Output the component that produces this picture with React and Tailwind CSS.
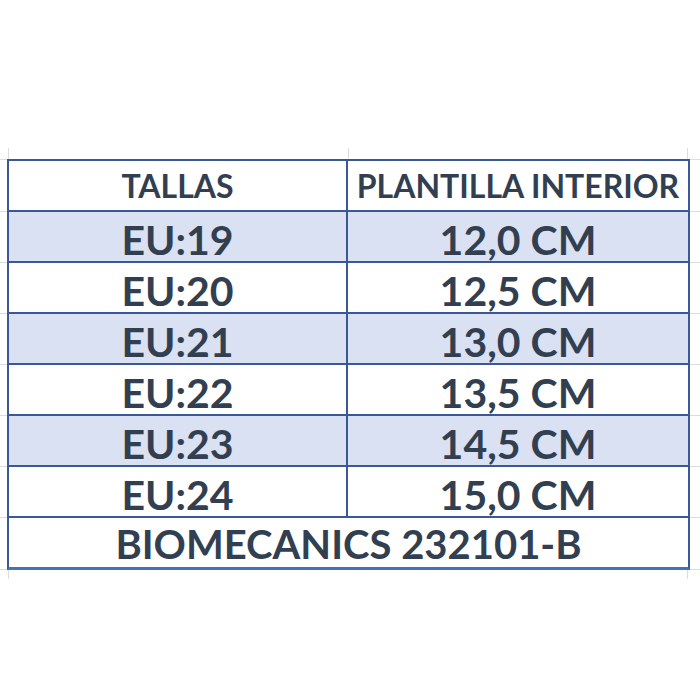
import React from "react";

const rows = [
  ["EU:19", "12,0 CM", true],
  ["EU:20", "12,5 CM", false],
  ["EU:21", "13,0 CM", true],
  ["EU:22", "13,5 CM", false],
  ["EU:23", "14,5 CM", true],
  ["EU:24", "15,0 CM", false],
];

const font = { fontFamily: "Lato, 'Open Sans', sans-serif" };

function Row({ children, top = false, last = false }) {
  return (
    <div className="flex">
      <div className={"w-[7px] shrink-0 border-[#dcdcdc] " + (top ? "border-t" : "") + " border-b"} />
      <div
        className={
          "flex w-[683px] shrink-0 border-x-2 border-[#3a5895] " +
          (top ? "border-t-2 " : "") +
          (last ? "border-b-[3px] border-b-[#4470bf]" : "border-b-2")
        }
      >
        {children}
      </div>
      <div className={"flex-1 border-[#dcdcdc] " + (top ? "border-t" : "") + " border-b"} />
    </div>
  );
}

export default function App() {
  return (
    <div className="w-[700px] h-[700px] bg-white pt-[148px] text-[#323f50] font-bold" style={font}>
      <div className="flex h-[11px]">
        <div className="w-[8px]" />
        <div className="w-[340px] border-l border-[#dcdcdc]" />
        <div className="w-[340px] border-x border-[#dcdcdc]" />
      </div>
      <Row top>
        <div className="w-[339px] h-[49px] flex items-center justify-center text-[32px] leading-none pt-[1px] border-r-2 border-[#3a5895]">
          TALLAS
        </div>
        <div className="flex-1 h-[49px] flex items-center justify-center text-[32px] leading-none pt-[1px]">
          PLANTILLA INTERIOR
        </div>
      </Row>
      {rows.map(([a, b, shaded]) => (
        <Row key={a}>
          <div
            className={
              "w-[339px] h-[49px] flex items-center justify-center text-[41px] leading-none pt-[5px] border-r-2 border-[#3a5895] " +
              (shaded ? "bg-[#d9e1f2]" : "bg-white")
            }
          >
            {a}
          </div>
          <div
            className={
              "flex-1 h-[49px] flex items-center justify-center text-[41px] leading-none pt-[5px] " +
              (shaded ? "bg-[#d9e1f2]" : "bg-white")
            }
          >
            {b}
          </div>
        </Row>
      ))}
      <Row last>
        <div className="flex-1 h-[49px] flex items-center justify-center text-[40px] leading-none pt-[3px]">
          BIOMECANICS 232101-B
        </div>
      </Row>
      <div className="flex h-[9px]">
        <div className="w-[8px]" />
        <div className="w-[680px] border-x border-[#dcdcdc]" />
      </div>
    </div>
  );
}
